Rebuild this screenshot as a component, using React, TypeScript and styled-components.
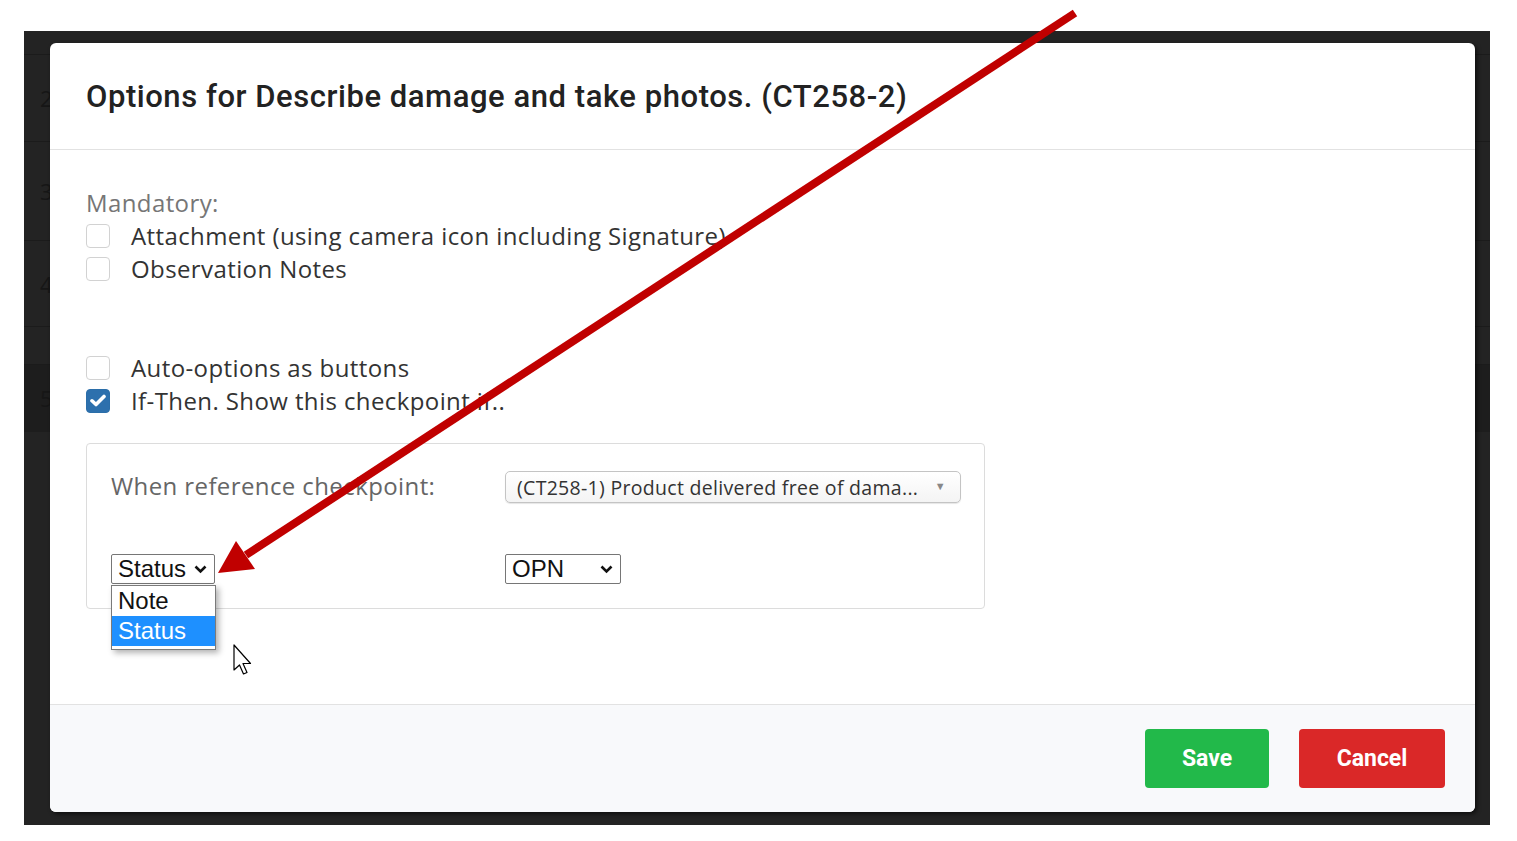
import React from "react";
import styled, { createGlobalStyle } from "styled-components";

const GlobalStyle = createGlobalStyle`
  html, body {
    margin: 0;
    padding: 0;
    background: #ffffff;
  }
  body {
    width: 1517px;
    height: 841px;
    overflow: hidden;
    position: relative;
  }
`;

const Page = styled.div`
  padding: 31px 0 0 24px;
`;

const Frame = styled.div`
  position: relative;
  width: 1466px;
  height: 794px;
  background: #232323;
  overflow: hidden;
`;

const BackRow = styled.div<{ $h: number; $dark?: boolean; $line?: boolean }>`
  height: ${(p) => p.$h}px;
  border-bottom: 1px solid ${(p) => (p.$line === false ? "transparent" : "#1b1b1b")};
  background: ${(p) => (p.$dark ? "#1d1d1d" : "transparent")};
  display: flex;
  align-items: center;
  padding-left: 16px;
  font-family: "Open Sans", sans-serif;
  font-size: 22px;
  color: #161616;
  box-sizing: border-box;
`;

const Modal = styled.div`
  position: absolute;
  left: 26px;
  top: 12px;
  width: 1425px;
  height: 769px;
  background: #ffffff;
  border-radius: 6px;
  box-shadow: 2px 2px 4px rgba(0, 0, 0, 0.6);
  display: flex;
  flex-direction: column;
  overflow: hidden;
`;

const Header = styled.div`
  height: 107px;
  border-bottom: 1px solid #e2e2e2;
  display: flex;
  align-items: center;
  padding: 0 36px;
  box-sizing: border-box;
`;

const Title = styled.h1`
  margin: 0;
  padding-top: 1px;
  font-family: Roboto, "Liberation Sans", sans-serif;
  font-weight: 500;
  font-size: 31px;
  color: #222222;
  letter-spacing: 0.55px;
`;

const Body = styled.div`
  flex: 1;
  padding: 36px 36px 0 36px;
  font-family: "Open Sans", sans-serif;
  letter-spacing: 0.4px;
`;

const SectionLabel = styled.div`
  font-size: 24px;
  line-height: 33px;
  color: #767676;
`;

const CheckRow = styled.label`
  display: flex;
  align-items: center;
  height: 33px;
  font-size: 24px;
  color: #333333;
  gap: 21px;
`;

const Box = styled.span<{ $checked?: boolean }>`
  width: 24px;
  height: 24px;
  box-sizing: border-box;
  border-radius: 4px;
  border: 1px solid ${(p) => (p.$checked ? "#2b6ea9" : "#d2d2d2")};
  background: ${(p) => (p.$checked ? "#2d70ad" : "#ffffff")};
  display: flex;
  align-items: center;
  justify-content: center;
  flex-shrink: 0;
`;

const Spacer = styled.div<{ $h: number }>`
  height: ${(p) => p.$h}px;
`;

const RefBox = styled.div`
  margin-top: 26px;
  width: 899px;
  height: 166px;
  box-sizing: border-box;
  border: 1px solid #dcdcdc;
  border-radius: 4px;
  padding: 27px 24px 0 24px;
  display: grid;
  grid-template-columns: 394px 456px;
  grid-template-rows: 32px 30px;
  row-gap: 51px;
  align-items: center;
`;

const RefLabel = styled.div`
  font-size: 24px;
  color: #666666;
  margin-top: -4px;
`;

const FancySelect = styled.div`
  height: 32px;
  box-sizing: border-box;
  border: 1px solid #c4c4c4;
  border-radius: 5px;
  background: linear-gradient(#ffffff, #f4f4f4);
  box-shadow: 0 1px 1px rgba(0, 0, 0, 0.1);
  display: flex;
  align-items: center;
  justify-content: space-between;
  padding: 0 14px 0 11px;
  font-size: 19.5px;
  letter-spacing: 0.3px;
  color: #333333;
`;

const Caret = styled.span`
  font-size: 11px;
  color: #888888;
  margin-top: -4px;
`;

const NativeWrap = styled.div`
  position: relative;
  height: 30px;
`;

const NativeSelect = styled.div<{ $w: number }>`
  width: ${(p) => p.$w}px;
  height: 30px;
  box-sizing: border-box;
  border: 1px solid #767676;
  border-radius: 2px;
  background: #ffffff;
  display: flex;
  align-items: center;
  justify-content: space-between;
  padding: 0 7px 0 6px;
  font-family: "Liberation Sans", Arial, sans-serif;
  font-size: 24px;
  letter-spacing: 0;
  color: #111111;
`;

const Popup = styled.div`
  position: absolute;
  left: 0;
  top: 31px;
  width: 105px;
  box-sizing: border-box;
  border: 1px solid #7a7a7a;
  background: #ffffff;
  box-shadow: 3px 3px 6px rgba(0, 0, 0, 0.3);
  padding-bottom: 3px;
  z-index: 2;
`;

const Option = styled.div<{ $active?: boolean }>`
  height: 30px;
  display: flex;
  align-items: center;
  padding-left: 6px;
  font-family: "Liberation Sans", Arial, sans-serif;
  font-size: 24px;
  letter-spacing: 0;
  color: ${(p) => (p.$active ? "#ffffff" : "#111111")};
  background: ${(p) => (p.$active ? "#1e90ff" : "#ffffff")};
`;

const Footer = styled.div`
  height: 108px;
  border-top: 1px solid #e2e2e2;
  background: #f8f9fb;
  display: flex;
  align-items: center;
  justify-content: flex-end;
  gap: 30px;
  padding-right: 30px;
  box-sizing: border-box;
`;

const Button = styled.button<{ $tone: "save" | "cancel"; $w: number }>`
  width: ${(p) => p.$w}px;
  height: 59px;
  border: none;
  border-radius: 4px;
  background: ${(p) => (p.$tone === "save" ? "#22b94a" : "#da2828")};
  color: #ffffff;
  font-family: Roboto, "Liberation Sans", sans-serif;
  font-weight: 700;
  font-size: 23px;
  cursor: pointer;
`;

const Overlay = styled.svg`
  position: absolute;
  left: 0;
  top: 0;
  pointer-events: none;
  z-index: 10;
`;

const Chevron = () => (
  <svg width="13" height="9" viewBox="0 0 13 9">
    <path d="M1.5 1.5 L6.5 6.5 L11.5 1.5" fill="none" stroke="#111" strokeWidth="2.6" />
  </svg>
);

const Check = () => (
  <svg width="16" height="13" viewBox="0 0 16 13">
    <path d="M2 6.8 L6 10.5 L14 2.5" fill="none" stroke="#fff" strokeWidth="3.6" strokeLinecap="round" strokeLinejoin="round" />
  </svg>
);

export default function App() {
  return (
    <>
      <GlobalStyle />
      <Page>
        <Frame>
          <BackRow $h={24} />
          <BackRow $h={87}>2</BackRow>
          <BackRow $h={99}>3</BackRow>
          <BackRow $h={86}>4</BackRow>
          <BackRow $h={38} />
          <BackRow $h={67} $dark $line={false}>5</BackRow>

          <Modal>
            <Header>
              <Title>Options for Describe damage and take photos. (CT258-2)</Title>
            </Header>
            <Body>
              <SectionLabel>Mandatory:</SectionLabel>
              <CheckRow>
                <Box />
                Attachment (using camera icon including Signature)
              </CheckRow>
              <CheckRow>
                <Box />
                Observation Notes
              </CheckRow>
              <Spacer $h={66} />
              <CheckRow>
                <Box />
                Auto-options as buttons
              </CheckRow>
              <CheckRow>
                <Box $checked>
                  <Check />
                </Box>
                If-Then. Show this checkpoint if..
              </CheckRow>

              <RefBox>
                <RefLabel>When reference checkpoint:</RefLabel>
                <FancySelect>
                  <span>(CT258-1) Product delivered free of dama...</span>
                  <Caret>▼</Caret>
                </FancySelect>
                <NativeWrap>
                  <NativeSelect $w={104}>
                    Status
                    <Chevron />
                  </NativeSelect>
                  <Popup>
                    <Option>Note</Option>
                    <Option $active>Status</Option>
                  </Popup>
                </NativeWrap>
                <NativeWrap>
                  <NativeSelect $w={116}>
                    OPN
                    <Chevron />
                  </NativeSelect>
                </NativeWrap>
              </RefBox>
            </Body>
            <Footer>
              <Button $tone="save" $w={124}>Save</Button>
              <Button $tone="cancel" $w={146}>Cancel</Button>
            </Footer>
          </Modal>
        </Frame>
      </Page>

      <Overlay width="1517" height="841" viewBox="0 0 1517 841">
        <line x1="1075" y1="13" x2="246" y2="555" stroke="#c00000" strokeWidth="8" />
        <polygon points="218,573 236,541 255,569" fill="#c00000" />
        <path
          d="M234 645 L234 670 L239.5 665 L243.5 674 L247 672.5 L243 663.5 L250.5 663.5 Z"
          fill="#ffffff"
          stroke="#000000"
          strokeWidth="1.2"
          strokeLinejoin="round"
        />
      </Overlay>
    </>
  );
}
